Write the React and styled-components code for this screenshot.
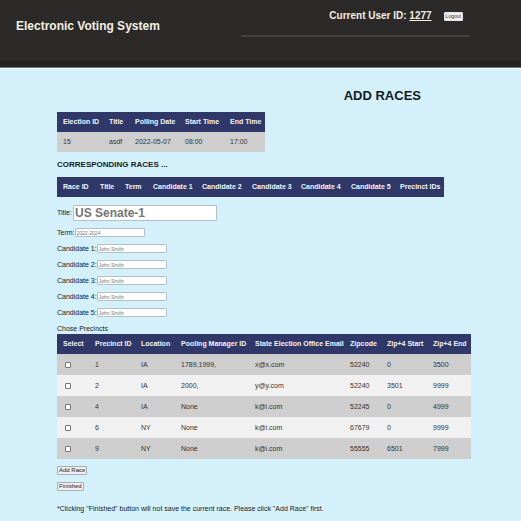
import React from "react";
import styled, { createGlobalStyle } from "styled-components";

const GlobalStyle = createGlobalStyle`
  *, *::before, *::after { box-sizing: border-box; }
  body {
    margin: 0;
    background: #d4f0fb;
    color: #151b1f;
    font: 7px/10px "Liberation Sans", Arial, sans-serif;
  }
  html { scrollbar-width: none; }
`;

const Header = styled.header`
  display: flex;
  justify-content: space-between;
  height: 68px;
  padding: 0 10% 0 16px;
  background: linear-gradient(#2b2a28 60px, #252322 61px);
  border-bottom: 1px solid #777475;
  box-shadow: 0 1px 0 #f7fcfe;
  color: #f3efe2;
`;

const Brand = styled.h1`
  margin: 19px 0 0;
  font-size: 12px;
  line-height: 14px;
`;

const UserBar = styled.div`
  display: flex;
  justify-content: flex-end;
  align-items: center;
  gap: 12px;
  width: 228px;
  height: 37px;
  padding: 0 6px 3px 0;
  border-bottom: 2px solid #444241;
  font-size: 10px;
  font-weight: bold;
`;

const Button = styled.button`
  display: block;
  height: 9px;
  padding: 0 1px;
  border: 1px solid #a5adb2;
  border-radius: 1px;
  background: #efefef;
  color: #222;
  font: 6px/7px "Liberation Sans", Arial, sans-serif;
`;

const LogoutButton = styled(Button)`
  border-color: #e4e4e4;
  color: #333;
  font-size: 5px;
`;

const Main = styled.main`
  padding: 20px 50px 0 57px;
`;

const PageTitle = styled.h2`
  margin: 0 50px 8px 0;
  font-size: 13px;
  line-height: 16px;
  text-align: right;
`;

const SectionTitle = styled.h3`
  margin: 7px 0;
  font-size: 8px;
  line-height: 11px;
`;

const Table = styled.table`
  border-collapse: collapse;
  table-layout: fixed;
  width: ${(p) => p.$width}px;
  color: #333;
`;

const HeadCell = styled.th`
  width: ${(p) => p.$width}px;
  height: 20px;
  padding: 0 0 0 6px;
  background: #2f3869;
  color: #f4f5fa;
  text-align: left;
  white-space: nowrap;
`;

const Row = styled.tr`
  background: #f1f1f1;
  &:nth-child(odd) { background: #cecece; }
`;

const Cell = styled.td`
  height: ${(p) => p.$height}px;
  padding: 0 0 0 6px;
`;

const Check = styled.input`
  display: block;
  width: 6px;
  height: 6px;
  margin: 0 0 0 2px;
  appearance: none;
  border: 1px solid #777;
  border-radius: 1px;
  background: #fff;
  &:checked { background: #2f3869; }
`;

const Form = styled.form`
  margin-top: 8px;
`;

const Field = styled.div`
  display: flex;
  align-items: center;
  height: ${(p) => (p.$large ? 16 : 9)}px;
  margin-bottom: 7px;
`;

const Label = styled.label`
  flex: none;
  min-width: ${(p) => p.$width}px;
  white-space: nowrap;
`;

const TextInput = styled.input`
  width: ${(p) => (p.$large ? 144 : 70)}px;
  height: ${(p) => (p.$large ? 16 : 9)}px;
  padding: 0 1px;
  border: 1px solid #b4c0c5;
  border-radius: 1px;
  background: #fff;
  font-family: inherit;
  font-size: ${(p) => (p.$large ? 12 : 5)}px;
  font-weight: ${(p) => (p.$large ? "bold" : "normal")};
  color: #333;
  &::placeholder { color: #757575; }
`;

const Caption = styled.p`
  margin: 0;
  height: 10px;
  line-height: 10px;
`;

const Actions = styled.div`
  display: flex;
  flex-direction: column;
  align-items: flex-start;
  gap: 7px;
  margin-top: 7px;
`;

const Note = styled.p`
  margin: 13px 0 0;
  padding-bottom: 7px;
`;

const electionColumns = [["Election ID", 46], ["Title", 26], ["Polling Date", 50], ["Start Time", 45], ["End Time", 41]];
const raceColumns = [
  ["Race ID", 37], ["Title", 25], ["Term", 28], ["Candidate 1", 49], ["Candidate 2", 50],
  ["Candidate 3", 49], ["Candidate 4", 50], ["Candidate 5", 49], ["Precinct IDs", 50],
];
const precinctColumns = [
  ["Select", 32], ["Precinct ID", 46], ["Location", 40], ["Pooling Manager ID", 74],
  ["State Election Office Email", 95], ["Zipcode", 37], ["Zip+4 Start", 46], ["Zip+4 End", 44],
];
const precincts = [
  ["1", "IA", "1789,1999,", "x@x.com", "52240", "0", "3500"],
  ["2", "IA", "2000,", "y@y.com", "52240", "3501", "9999"],
  ["4", "IA", "None", "k@i.com", "52245", "0", "4999"],
  ["6", "NY", "None", "k@i.com", "67679", "0", "9999"],
  ["9", "NY", "None", "k@i.com", "55555", "6501", "7999"],
];

function DataTable({ columns, children }) {
  return (
    <Table $width={columns.reduce((sum, [, width]) => sum + width, 0)}>
      <thead>
        <tr>
          {columns.map(([name, width]) => (
            <HeadCell key={name} scope="col" $width={width}>{name}</HeadCell>
          ))}
        </tr>
      </thead>
      {children && <tbody>{children}</tbody>}
    </Table>
  );
}

export default function App() {
  return (
    <>
      <GlobalStyle />
      <Header>
        <Brand>Electronic Voting System</Brand>
        <UserBar>
          <span>Current User ID: <u>1277</u></span>
          <LogoutButton type="button">Logout</LogoutButton>
        </UserBar>
      </Header>
      <Main>
        <PageTitle>ADD RACES</PageTitle>
        <DataTable columns={electionColumns}>
          <Row>
            {["15", "asdf", "2022-05-07", "08:00", "17:00"].map((value) => (
              <Cell key={value} $height={20}>{value}</Cell>
            ))}
          </Row>
        </DataTable>
        <SectionTitle>CORRESPONDING RACES ...</SectionTitle>
        <DataTable columns={raceColumns} />
        <Form onSubmit={(event) => event.preventDefault()}>
          <Field $large>
            <Label htmlFor="title" $width={16}>Title:</Label>
            <TextInput id="title" $large placeholder="US Senate-1" />
          </Field>
          <Field>
            <Label htmlFor="term" $width={17}>Term:</Label>
            <TextInput id="term" placeholder="2022-2024" />
          </Field>
          {[1, 2, 3, 4, 5].map((n) => (
            <Field key={n}>
              <Label htmlFor={`candidate-${n}`} $width={39}>Candidate {n}:</Label>
              <TextInput id={`candidate-${n}`} placeholder="John Smith" />
            </Field>
          ))}
          <Caption>Chose Precincts</Caption>
          <DataTable columns={precinctColumns}>
            {precincts.map((values) => (
              <Row key={values[0]}>
                <Cell $height={21}>
                  <Check type="checkbox" aria-label={`Select precinct ${values[0]}`} />
                </Cell>
                {values.map((value, i) => (
                  <Cell key={i} $height={21}>{value}</Cell>
                ))}
              </Row>
            ))}
          </DataTable>
          <Actions>
            <Button type="submit">Add Race</Button>
            <Button type="button">Finished</Button>
          </Actions>
        </Form>
        <Note>*Clicking "Finished" button will not save the current race. Please click "Add Race" first.</Note>
      </Main>
    </>
  );
}
